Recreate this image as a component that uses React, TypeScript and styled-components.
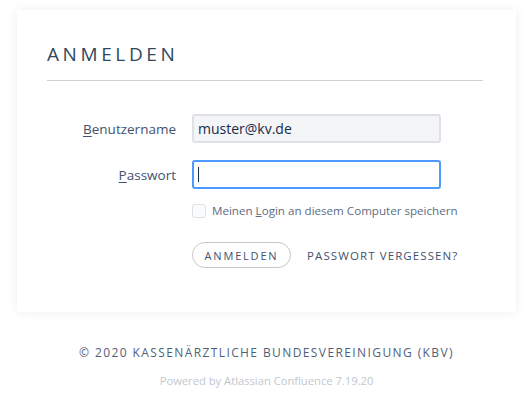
import React from 'react';
import styled, { createGlobalStyle } from 'styled-components';

const GlobalStyle = createGlobalStyle`
  html, body {
    margin: 0;
    padding: 0;
    background: #ffffff;
    font-family: 'Open Sans', 'Noto Sans', sans-serif;
  }
`;

const Page = styled.div`
  width: 527px;
  box-sizing: border-box;
  padding: 10px 0 0 6px;
  display: flex;
  flex-direction: column;
  align-items: center;
`;

const Card = styled.div`
  width: 499px;
  box-sizing: border-box;
  background: #fff;
  padding: 32px 33px 44px 30px;
  box-shadow: 0 0 10px rgba(0, 0, 0, 0.07);
`;

const Title = styled.h1`
  margin: 0;
  font-size: 19px;
  font-weight: 400;
  letter-spacing: 3.6px;
  color: #30485c;
  line-height: 24px;
  padding-bottom: 14px;
  border-bottom: 1px solid #cfcfcf;
`;

const Form = styled.form`
  display: grid;
  grid-template-columns: 129px 249px;
  column-gap: 16px;
  row-gap: 17px;
  margin-top: 33px;
  align-items: center;
`;

const Label = styled.label`
  text-align: right;
  font-size: 13.5px;
  color: #42526e;
  u { text-decoration: underline; text-underline-offset: 2px; }
`;

const Input = styled.input<{ $focused?: boolean }>`
  box-sizing: border-box;
  width: 249px;
  height: 29px;
  border-radius: 3px;
  border: 2px solid ${p => (p.$focused ? '#4c9aff' : '#dfe1e6')};
  background: ${p => (p.$focused ? '#fff' : '#f4f5f7')};
  font-family: inherit;
  font-size: 14px;
  color: #172b4d;
  padding: 0 4px;
  outline: none;
`;

const Caret = styled.div`
  position: relative;
  height: 29px;
  &::after {
    content: '';
    position: absolute;
    left: 6px;
    top: 7px;
    width: 1px;
    height: 15px;
    background: #172b4d;
  }
`;

const CheckRow = styled.div`
  grid-column: 2;
  display: flex;
  align-items: center;
  gap: 6px;
  font-size: 11.6px;
  color: #5e6c84;
  margin-top: -3px;
  white-space: nowrap;
`;

const Box = styled.span`
  flex-shrink: 0;
  box-sizing: border-box;
  width: 14px;
  height: 14px;
  border: 1px solid #dfe1e6;
  border-radius: 3px;
  background: #fafbfc;
`;

const Actions = styled.div`
  grid-column: 2;
  display: flex;
  align-items: center;
  gap: 16px;
  margin-top: 7px;
  white-space: nowrap;
`;

const Button = styled.button`
  flex-shrink: 0;
  height: 26px;
  width: 99px;
  border-radius: 13px;
  border: 1px solid #c8c8c8;
  background: #fff;
  font-family: inherit;
  font-size: 11px;
  letter-spacing: 1.8px;
  color: #42526e;
  padding: 0;
`;

const LinkText = styled.span`
  flex-shrink: 0;
  font-size: 11.5px;
  letter-spacing: 1.1px;
  color: #42526e;
`;

const Footer = styled.div`
  margin-top: 32px;
  font-size: 12px;
  letter-spacing: 1.4px;
  color: #505f79;
  white-space: nowrap;
`;

const Powered = styled.div`
  margin-top: 12px;
  font-size: 11.2px;
  color: #c1c7d0;
`;

export default function App() {
  return (
    <>
      <GlobalStyle />
      <Page>
        <Card>
          <Title>ANMELDEN</Title>
          <Form>
            <Label>
              <u>B</u>enutzername
            </Label>
            <Input defaultValue="muster@kv.de" />
            <Label>
              <u>P</u>asswort
            </Label>
            <Caret>
              <Input $focused type="password" />
            </Caret>
            <CheckRow>
              <Box />
              <span>
                Meinen <u>L</u>ogin an diesem Computer speichern
              </span>
            </CheckRow>
            <Actions>
              <Button type="button">ANMELDEN</Button>
              <LinkText>PASSWORT VERGESSEN?</LinkText>
            </Actions>
          </Form>
        </Card>
        <Footer>© 2020 KASSENÄRZTLICHE BUNDESVEREINIGUNG (KBV)</Footer>
        <Powered>Powered by Atlassian Confluence 7.19.20</Powered>
      </Page>
    </>
  );
}
